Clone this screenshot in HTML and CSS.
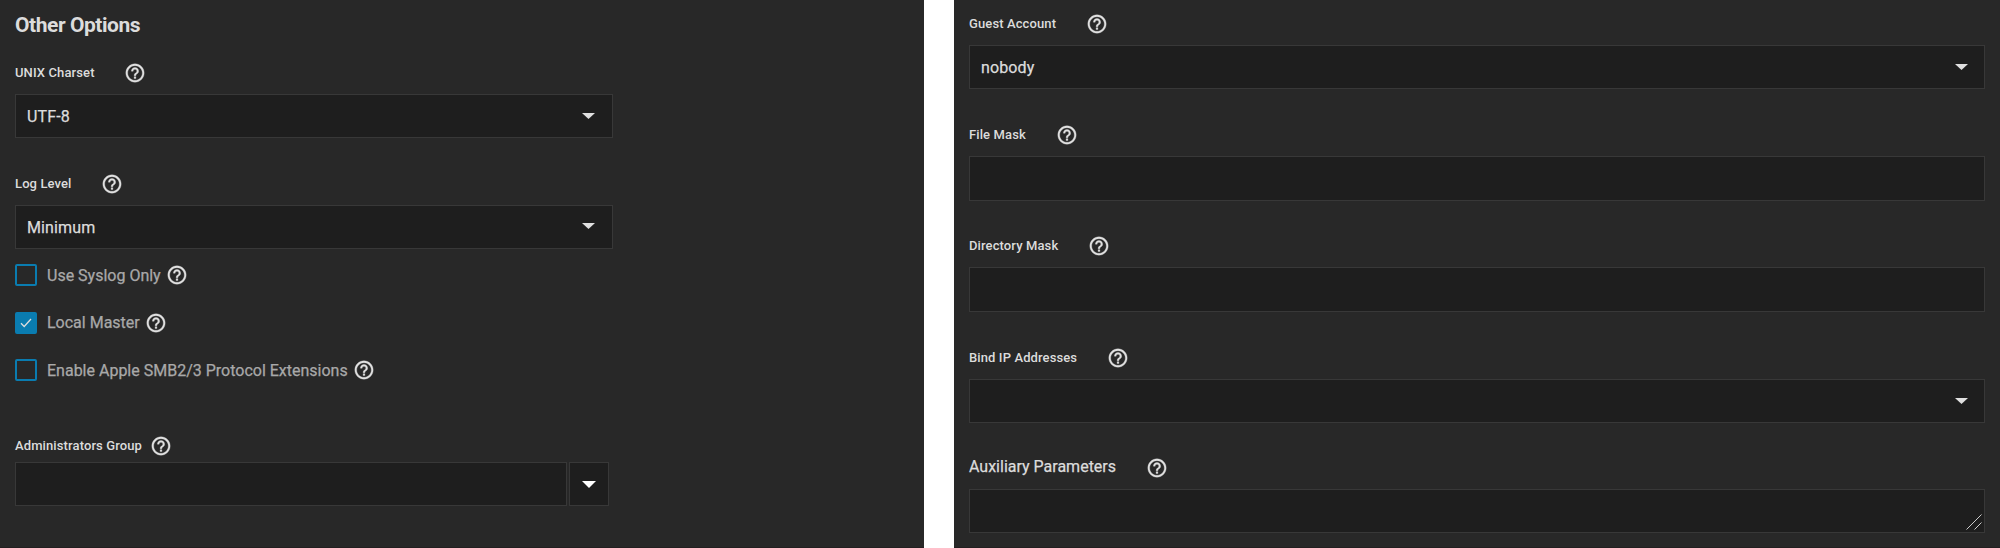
FILE: index.html
```html
<!DOCTYPE html>
<html lang="en">
<head>
<meta charset="utf-8">
<title>SMB Options</title>
<link rel="stylesheet" href="styles.css">
</head>
<body>
<svg width="0" height="0" class="defs">
  <symbol id="help" viewBox="0 0 24 24"><path d="M11 18h2v-2h-2v2zm1-16C6.48 2 2 6.48 2 12s4.480 10 10 10 10-4.480 10-10S17.520 2 12 2zm0 18c-4.410 0-8-3.590-8-8s3.590-8 8-8 8 3.590 8 8-3.590 8-8 8zm0-14c-2.210 0-4 1.790-4 4h2c0-1.100.9-2 2-2s2 .9 2 2c0 2-3 1.750-3 5h2c0-2.250 3-2.500 3-5 0-2.210-1.790-4-4-4z"/></symbol>
  <symbol id="arrow" viewBox="0 0 14 7" preserveAspectRatio="none"><path d="M0 0h14L7 7z"/></symbol>
</svg>
<main class="page">
  <section class="panel left">
    <h1 class="title">Other Options</h1>
    <div class="label-row unix"><label class="label">UNIX Charset</label><svg class="help"><use href="#help"/></svg></div>
    <div class="control narrow"><span class="value">UTF-8</span><svg class="arrow"><use href="#arrow"/></svg></div>
    <div class="label-row log"><label class="label">Log Level</label><svg class="help"><use href="#help"/></svg></div>
    <div class="control narrow level"><span class="value">Minimum</span><svg class="arrow"><use href="#arrow"/></svg></div>
    <div class="checks">
      <div class="check-row"><i class="box"></i><span class="check-text">Use Syslog Only</span><svg class="help"><use href="#help"/></svg></div>
      <div class="check-row"><i class="box checked"><svg class="tick" viewBox="0 0 12 10"><path d="M1 5.200 4.200 8.500 11 1"/></svg></i><span class="check-text">Local Master</span><svg class="help"><use href="#help"/></svg></div>
      <div class="check-row"><i class="box"></i><span class="check-text">Enable Apple SMB2/3 Protocol Extensions</span><svg class="help"><use href="#help"/></svg></div>
    </div>
    <div class="label-row admin"><label class="label">Administrators Group</label><svg class="help"><use href="#help"/></svg></div>
    <div class="combo"><div class="control field"></div><div class="control button"><svg class="arrow"><use href="#arrow"/></svg></div></div>
  </section>
  <section class="panel right">
    <div class="label-row guest"><label class="label">Guest Account</label><svg class="help"><use href="#help"/></svg></div>
    <div class="control"><span class="value">nobody</span><svg class="arrow"><use href="#arrow"/></svg></div>
    <div class="label-row file"><label class="label">File Mask</label><svg class="help"><use href="#help"/></svg></div>
    <div class="control tall"></div>
    <div class="label-row directory"><label class="label">Directory Mask</label><svg class="help"><use href="#help"/></svg></div>
    <div class="control tall"></div>
    <div class="label-row bind"><label class="label">Bind IP Addresses</label><svg class="help"><use href="#help"/></svg></div>
    <div class="control"><span class="value"></span><svg class="arrow"><use href="#arrow"/></svg></div>
    <div class="label-row aux"><label class="label large">Auxiliary Parameters</label><svg class="help"><use href="#help"/></svg></div>
    <div class="control area"><svg class="grip" viewBox="0 0 16 16"><path d="M.5 15.500 15.500.5M8.500 15.500l7-7"/></svg></div>
  </section>
</main>
</body>
</html>
```
FILE: styles.css
```css
* { box-sizing: border-box; }
body { margin: 0; background: #fff; font-family: Roboto, sans-serif; color: #dcdcdc; }
.defs { position: absolute; }
.page { display: grid; grid-template-columns: 924px 1046px; gap: 30px; height: 548px; overflow: hidden; }
.panel { background: #282828; height: 548px; padding: 0 15px; border-bottom: 1px solid #231f20; }
.title { margin: 0; padding-top: 13px; height: 62px; font-size: 21px; line-height: 24px; font-weight: 700; letter-spacing: -0.45px; }
.label-row { display: flex; height: 22px; gap: 30px; }
.label { font-size: 13px; line-height: 22px; font-weight: 500; letter-spacing: 0.11px; white-space: nowrap; }
.label.large { font-size: 16px; font-weight: 400; line-height: 20px; letter-spacing: 0; -webkit-text-stroke: 0.25px; }
.help { width: 22px; height: 22px; fill: #e0e0e0; stroke: #e0e0e0; stroke-width: 0.35; flex: none; }
.control { display: flex; align-items: center; justify-content: space-between; height: 44px; border: 1px solid #383838; background: #1e1e1e; padding: 0 16px 0 11px; }
.value { padding-top: 2px; font-size: 16px; line-height: 22px; letter-spacing: 0.12px; -webkit-text-stroke: 0.25px; }
.narrow { width: 598px; padding-right: 17px; }
.level .arrow { margin-bottom: 2px; }
.tall { height: 45px; }
.arrow { width: 13px; height: 6px; fill: #e0e0e0; }
.unix { margin-bottom: 10px; }
.log { margin: 35px 0 10px; }
.log, .unix { gap: 29.5px; }
.checks { margin-top: 15px; display: grid; gap: 25.5px; }
.check-row { display: flex; align-items: center; height: 22px; font-size: 16px; color: #a9a9a9; -webkit-text-stroke: 0.25px; }
.box { width: 22px; height: 22px; border: 2px solid #0a7cb0; border-radius: 2px; flex: none; display: grid; place-items: center; }
.checked { background: #0a7cb0; }
.tick { width: 12px; height: 10px; fill: none; stroke: #ddd; stroke-width: 1.3; }
.check-text { margin: 0 5px 0 10px; white-space: nowrap; }
.admin { margin: 54px 0 5px; gap: 8px; }
.combo { display: flex; gap: 2px; }
.field { width: 552px; }
.button { width: 40px; padding: 0; justify-content: center; }
.button .arrow { width: 14px; height: 7px; fill: #fff; }
.guest { margin-top: 13px; }
.guest, .file, .directory, .bind, .aux { margin-bottom: 10px; }
.file { margin-top: 35px; }
.directory { margin-top: 34px; }
.bind { margin-top: 35px; }
.aux { margin-top: 34px; }
.area { align-items: flex-end; justify-content: flex-end; padding: 0 2px 2px; }
.grip { width: 16px; height: 16px; fill: none; stroke: #ccc; stroke-width: 1; }
```
